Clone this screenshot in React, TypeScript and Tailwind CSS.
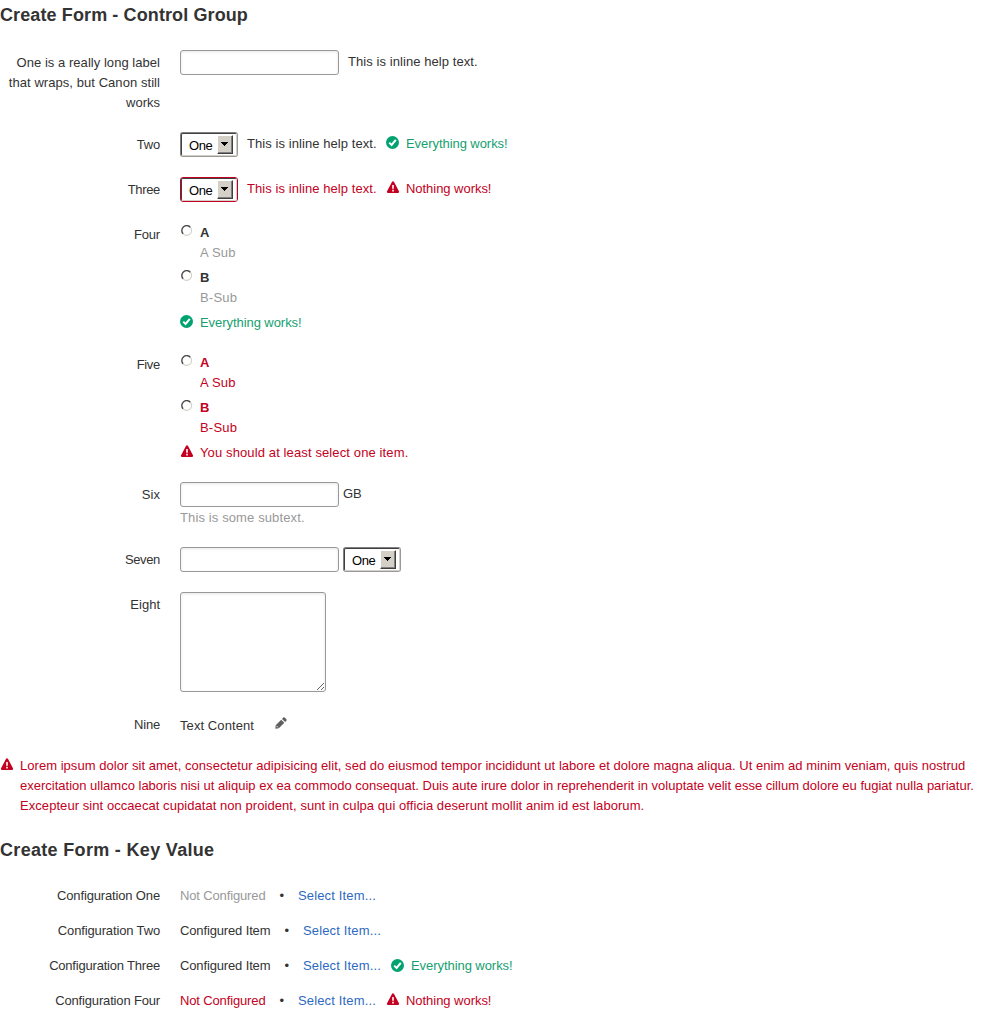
import type { ReactNode } from "react";

const Check = () => (
  <svg className="block h-[13px] w-[13px] shrink-0" viewBox="0 0 13 13">
    <circle cx="6.5" cy="6.5" r="6.5" fill="#00a36f" />
    <path d="M3.2 6.6 5.6 9 9.8 3.8" fill="none" stroke="#fff" strokeWidth="2" />
  </svg>
);

const Warn = () => (
  <svg className="block h-[13px] w-[13px] shrink-0" viewBox="0 0 13 13">
    <path d="M7 1.6 11.9 10.8H2.1Z" fill="#c40022" stroke="#c40022" strokeWidth="2.4" strokeLinejoin="round" />
    <path d="M6.2 3.9h1.6v3.8H6.2zM6.2 8.8h1.6v1.6H6.2z" fill="#fff" />
  </svg>
);

const Pencil = () => (
  <svg className="block h-[12px] w-[12px]" viewBox="0 0 12 12">
    <path d="M0.3 11.7 0.7 8.2 6.2 2.7 9.3 5.8 3.8 11.3Z M7 1.9 8.3 0.6Q9 0 9.7 0.6L11.4 2.3Q12 3 11.4 3.7L10.1 5Z" fill="#5f5f5f" />
    <path d="M1.5 8.9 2.9 10.4" stroke="#fff" strokeWidth="0.9" />
  </svg>
);

const Input = () => (
  <input className="block h-[25px] w-[159px] shrink-0 rounded-[3px] border border-[#999] bg-white shadow-[inset_0_1px_3px_rgba(0,0,0,0.1)] outline-none" />
);

function Select({ error = false }: { error?: boolean }) {
  return (
    <div
      className={
        error
          ? "h-[25px] w-[58px] shrink-0 rounded-[3px] border border-[#c40022]"
          : "h-[25px] w-[58px] shrink-0 rounded-[3px] border border-[#808080] border-r-[#999] border-b-[#999]"
      }
    >
      <div className="flex h-full rounded-[2px] border border-t-[#404040] border-l-[#404040] border-r-[#d4d0c8] border-b-[#d4d0c8]">
        <span className="w-[28px] pt-[2px] pl-[7px] tracking-[-0.4px] text-black">One</span>
        <span className="mt-px ml-[7px] flex h-[19px] w-[16px] items-center justify-center border border-t-white border-l-white border-r-[#404040] border-b-[#404040] bg-[#d4d0c8] shadow-[inset_-1px_-1px_0_#808080]">
          <svg className="mr-px -mt-px block h-[4px] w-[7px]" viewBox="0 0 7 4" shapeRendering="crispEdges">
            <path d="M0 0h7v1H6v1H5v1H4v1H3V3H2V2H1V1H0Z" fill="#000" />
          </svg>
        </span>
      </div>
    </div>
  );
}

const Radio = () => (
  <svg className="ml-px block h-[12px] w-[12px] shrink-0" viewBox="0 0 12 12">
    <path d="M9.3 2.2A4.8 4.8 0 0 1 2.1 8.8" fill="none" stroke="#d4d0c8" strokeWidth="1.1" />
    <path d="M2.1 8.8A4.8 4.8 0 0 1 9.3 2.2" fill="none" stroke="#484848" strokeWidth="1.4" />
  </svg>
);

function Option({ name, sub, error = false }: { name: string; sub: string; error?: boolean }) {
  return (
    <div className="flex h-[45px]">
      <div className="w-[20px] pt-[3px]"><Radio /></div>
      <div className={error ? "pt-px text-[#c40022]" : "pt-px text-[#999]"}>
        <div className={error ? "font-bold" : "font-bold text-[#333]"}>{name}</div>
        <div className="tracking-[0.2px]">{sub}</div>
      </div>
    </div>
  );
}

function Row({ label, height, track = "", children }: { label: string; height: string; track?: string; children: ReactNode }) {
  return (
    <div className={"flex " + height}>
      <div className={"w-[160px] shrink-0 pt-[3px] text-right " + track}>{label}</div>
      <div className="ml-[20px]">{children}</div>
    </div>
  );
}

const Good = ({ inset = "pt-[3px]" }: { inset?: string }) => (
  <div className="flex text-[#16a06f]">
    <div className={"w-[20px] " + inset}><Check /></div>
    <span className="pt-px tracking-[-0.06px]">Everything works!</span>
  </div>
);

const Bad = ({ children, track = "" }: { children: ReactNode; track?: string }) => (
  <div className="flex text-[#c40022]">
    <div className="w-[20px] shrink-0 pt-[3px]"><Warn /></div>
    <div className={"pt-px " + track}>{children}</div>
  </div>
);

function KeyRow({ label, track, value, tone, wide, children }: { label: string; track: string; value: string; tone: string; wide: boolean; children?: ReactNode }) {
  return (
    <div className="flex h-[35px]">
      <div className={"w-[160px] shrink-0 pt-px text-right " + track}>{label}</div>
      <div className={(wide ? "w-[106px] " : "w-[101px] ") + "ml-[20px] shrink-0 pt-px tracking-[-0.14px] " + tone}>{value}</div>
      <div className="-ml-[2px] w-[19px] shrink-0 pt-px pl-[0.5px]">•</div>
      <a className="w-[88px] shrink-0 pt-px tracking-[0.15px] text-[#2e69bf]">Select Item...</a>
      {children}
    </div>
  );
}

export default function App() {
  return (
    <main className="h-[1015px] w-[1008px] overflow-hidden bg-white font-['Liberation_Sans',Arial,sans-serif] text-[13px] leading-[20px] whitespace-nowrap text-[#333]">
      <h1 className="h-[50px] pt-[5px] text-[18px] leading-[20px] font-bold tracking-[0.11px]">Create Form - Control Group</h1>
      <div className="flex h-[82px]">
        <div className="w-[160px] shrink-0 pt-[3px] text-right">
          <div className="tracking-[0.04px]">One is a really long label</div>
          <div className="tracking-[0.06px]">that wraps, but Canon still</div>
          <div>works</div>
        </div>
        <div className="ml-[20px] flex">
          <Input />
          <span className="ml-[9px] pt-[2px] tracking-[0.07px]">This is inline help text.</span>
        </div>
      </div>
      <Row label="Two" height="h-[45px]" track="tracking-[-0.2px]">
        <div className="flex">
          <Select />
          <span className="ml-[9px] w-[139px] pt-[2px] tracking-[0.07px]">This is inline help text.</span>
          <div className="pt-px"><Good /></div>
        </div>
      </Row>
      <Row label="Three" height="h-[45px]" track="tracking-[-0.35px]">
        <div className="flex">
          <Select error />
          <span className="ml-[9px] w-[139px] pt-[2px] tracking-[0.07px] text-[#c40022]">This is inline help text.</span>
          <div className="pt-px"><Bad track="tracking-[-0.04px]">Nothing works!</Bad></div>
        </div>
      </Row>
      <Row label="Four" height="h-[130px]" track="tracking-[-0.2px]">
        <Option name="A" sub="A Sub" />
        <Option name="B" sub="B-Sub" />
        <Good />
      </Row>
      <Row label="Five" height="h-[130px]" track="tracking-[-0.3px]">
        <Option name="A" sub="A Sub" error />
        <Option name="B" sub="B-Sub" error />
        <Bad track="tracking-[0.12px]">You should at least select one item.</Bad>
      </Row>
      <Row label="Six" height="h-[65px]" track="tracking-[0.1px]">
        <div className="flex h-[25px]">
          <Input />
          <span className="ml-[4px] pt-[2px]">GB</span>
        </div>
        <div className="pt-px tracking-[0.12px] text-[#999]">This is some subtext.</div>
      </Row>
      <Row label="Seven" height="h-[45px]" track="tracking-[-0.35px]">
        <div className="flex gap-[4px]">
          <Input />
          <Select />
        </div>
      </Row>
      <Row label="Eight" height="h-[120px]">
        <textarea className="block h-[100px] w-[146px] resize rounded-[3px] border border-[#999] bg-white shadow-[inset_0_1px_3px_rgba(0,0,0,0.1)] outline-none" />
      </Row>
      <Row label="Nine" height="h-[43px]" track="tracking-[-0.2px]">
        <div className="flex">
          <span className="w-[95px] pt-[4px] tracking-[0.08px]">Text Content</span>
          <div className="pt-[4.5px]"><Pencil /></div>
        </div>
      </Row>
      <div className="h-[85px]">
        <Bad>
          <p className="tracking-[0.037px]">Lorem ipsum dolor sit amet, consectetur adipisicing elit, sed do eiusmod tempor incididunt ut labore et dolore magna aliqua. Ut enim ad minim veniam, quis nostrud</p>
          <p>exercitation ullamco laboris nisi ut aliquip ex ea commodo consequat. Duis aute irure dolor in reprehenderit in voluptate velit esse cillum dolore eu fugiat nulla pariatur.</p>
          <p className="tracking-[0.06px]">Excepteur sint occaecat cupidatat non proident, sunt in culpa qui officia deserunt mollit anim id est laborum.</p>
        </Bad>
      </div>
      <h2 className="h-[45px] text-[18px] leading-[20px] font-bold tracking-[0.32px]">Create Form - Key Value</h2>
      <KeyRow label="Configuration One" track="tracking-[-0.15px]" value="Not Configured" tone="text-[#999]" wide={false} />
      <KeyRow label="Configuration Two" track="tracking-[-0.14px]" value="Configured Item" tone="" wide />
      <KeyRow label="Configuration Three" track="tracking-[-0.2px]" value="Configured Item" tone="" wide><Good inset="pt-[4px]" /></KeyRow>
      <KeyRow label="Configuration Four" track="tracking-[-0.16px]" value="Not Configured" tone="text-[#c40022]" wide={false}><Bad track="tracking-[-0.04px]">Nothing works!</Bad></KeyRow>
    </main>
  );
}
